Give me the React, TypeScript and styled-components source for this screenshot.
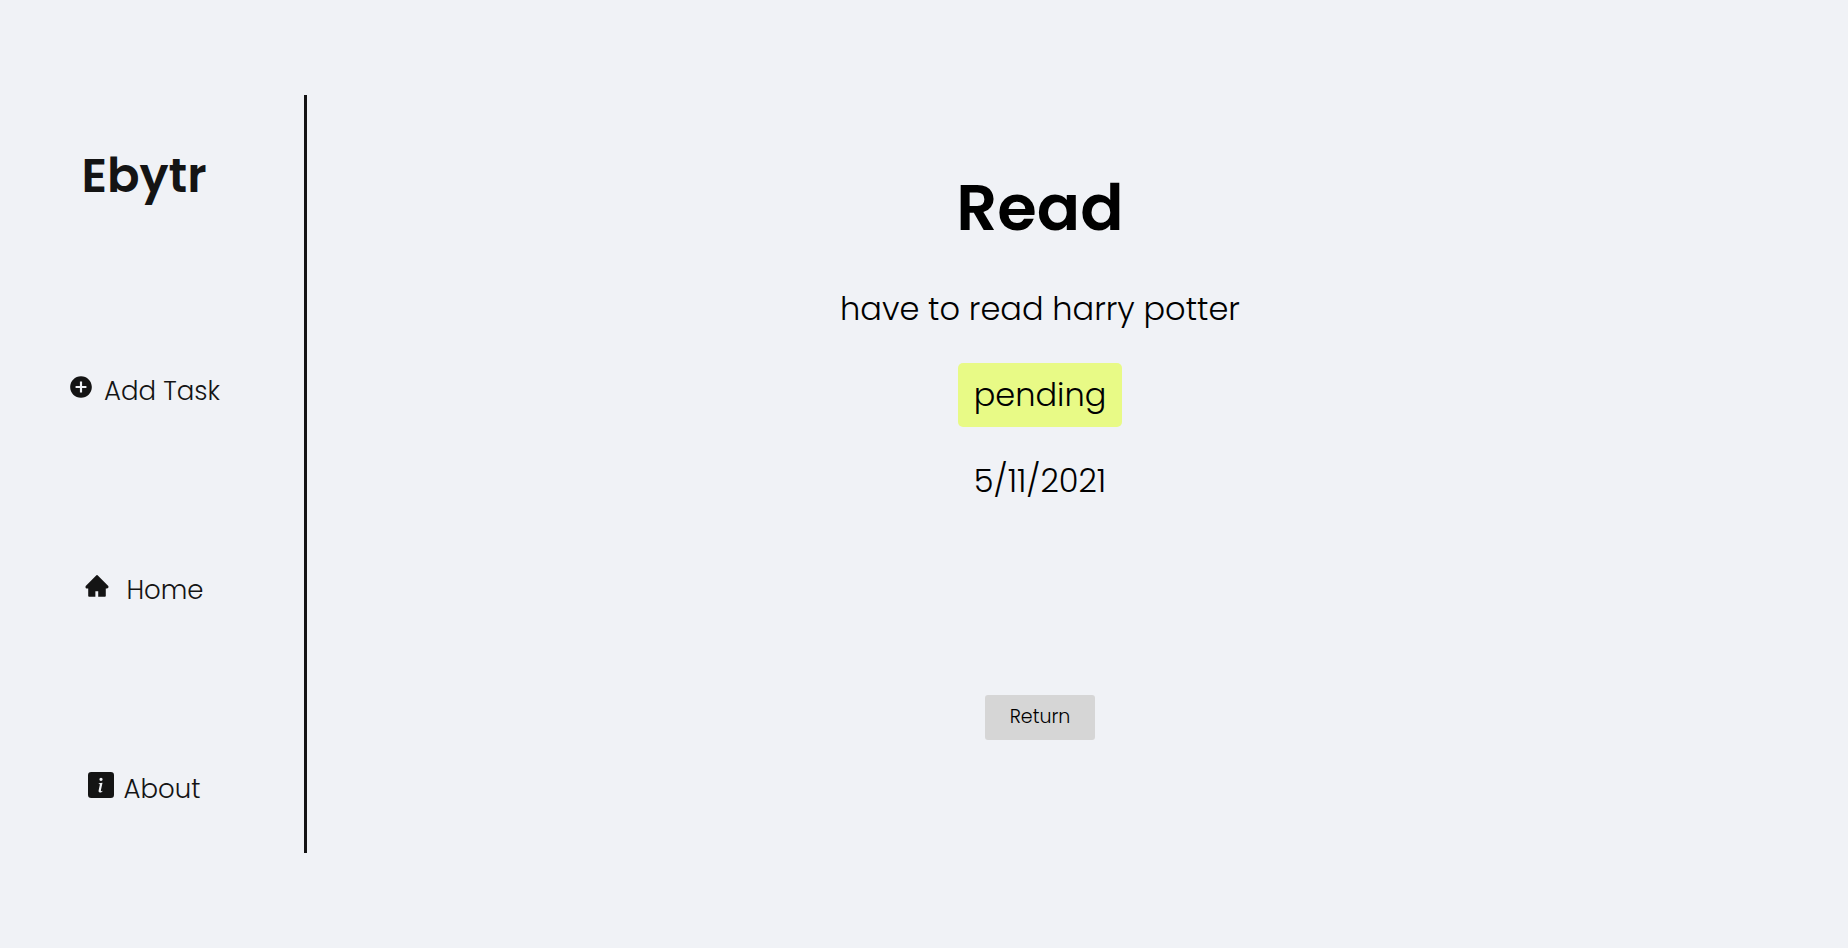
import React from "react";
import styled, { createGlobalStyle } from "styled-components";
import { AiFillHome } from "react-icons/ai";
import { BsFillInfoSquareFill } from "react-icons/bs";
import { MdAddCircle } from "react-icons/md";

const GlobalStyle = createGlobalStyle`
  * { box-sizing: border-box; }
  body {
    margin: 0;
    background: #f0f2f6;
    font-family: Poppins, Inter, sans-serif;
    font-weight: 300;
    color: #000;
  }
  h1, p { margin: 0; }
`;

const Page = styled.div`
  display: flex;
  min-height: 100vh;
  padding: 95px 0;
`;

const Sidebar = styled.aside`
  flex: none;
  display: flex;
  flex-direction: column;
  align-items: center;
  width: 307px;
  padding: 45px 16px 0 0;
  border-right: 3px solid #141414;
  color: #141414;
`;

const Brand = styled.p`
  font-size: 48px;
  line-height: 72px;
  font-weight: 600;
`;

const Nav = styled.nav`
  display: flex;
  flex-direction: column;
  align-items: center;
  gap: 159px;
  margin-top: 159px;
`;

const NavLink = styled.a<{ $gap: number }>`
  display: flex;
  align-items: flex-start;
  gap: ${({ $gap }) => $gap}px;
  font-size: 26px;
  line-height: 40px;
  color: inherit;
  text-decoration: none;
  white-space: nowrap;

  svg {
    margin-top: 3px;
  }
`;

const Task = styled.main`
  flex: 1;
  display: flex;
  flex-direction: column;
  align-items: center;
  padding: 65px 75px 0 0;
  font-size: 32px;
  line-height: 48px;
`;

const Title = styled.h1`
  font-size: 64px;
  line-height: 95px;
  font-weight: 600;
`;

const Detail = styled.p`
  margin-top: 30px;
`;

const Status = styled(Detail)`
  padding: 8px 16px;
  border-radius: 5px;
  background: #e8fa86;
`;

const ReturnButton = styled.button`
  margin-top: 190px;
  padding: 7px 25px 8px;
  border: 0;
  border-radius: 3px;
  background: #d6d6d6;
  color: inherit;
  font: inherit;
  font-size: 19px;
  line-height: 30px;
  cursor: pointer;
`;

export default function App() {
  return (
    <>
      <GlobalStyle />
      <Page>
        <Sidebar>
          <Brand>Ebytr</Brand>
          <Nav>
            <NavLink href="#add" $gap={10}>
              <MdAddCircle size={26} />
              Add Task
            </NavLink>
            <NavLink href="#home" $gap={16}>
              <AiFillHome size={26} />
              Home
            </NavLink>
            <NavLink href="#about" $gap={10}>
              <BsFillInfoSquareFill size={26} />
              About
            </NavLink>
          </Nav>
        </Sidebar>
        <Task>
          <Title>Read</Title>
          <Detail>have to read harry potter</Detail>
          <Status>pending</Status>
          <Detail>5/11/2021</Detail>
          <ReturnButton type="button">Return</ReturnButton>
        </Task>
      </Page>
    </>
  );
}
